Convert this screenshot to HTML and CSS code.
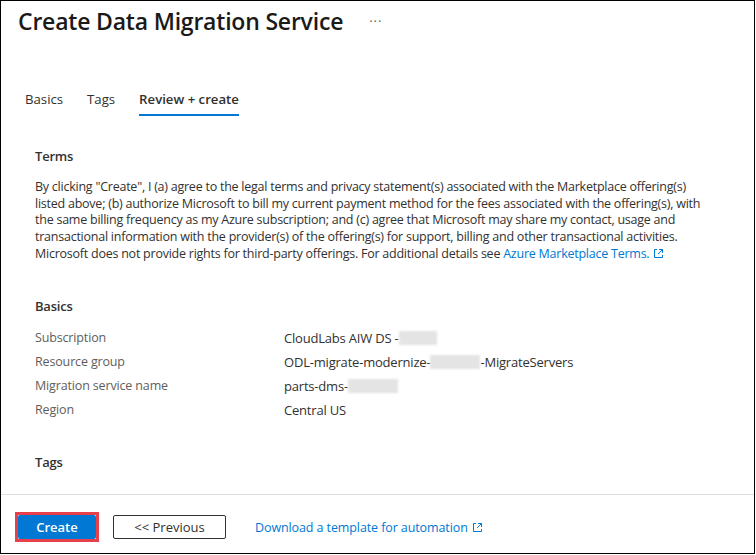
FILE: index.html
```html
<!DOCTYPE html>
<html lang="en">
<head>
<meta charset="utf-8">
<title>Create Data Migration Service</title>
<link rel="stylesheet" href="styles.css">
</head>
<body>
<div class="frame">
  <header class="header">
    <h1 class="title">Create Data Migration Service</h1>
    <span class="more">···</span>
  </header>
  <nav class="tabs">
    <span class="tab">Basics</span>
    <span class="tab">Tags</span>
    <span class="tab active">Review + create</span>
  </nav>
  <main class="content">
    <section class="section terms-section">
      <h2 class="section-title">Terms</h2>
      <p class="terms">By clicking "Create", I (a) agree to the legal terms and privacy statement(s) associated with the Marketplace offering(s)<br>listed above; (b) authorize Microsoft to bill my current payment method for the fees associated with the offering(s), with<br>the same billing frequency as my Azure subscription; and (c) agree that Microsoft may share my contact, usage and<br>transactional information with the provider(s) of the offering(s) for support, billing and other transactional activities.<br>Microsoft does not provide rights for third-party offerings. For additional details see <a class="link" href="#">Azure Marketplace Terms.</a><svg class="ext" width="11" height="11" viewBox="0 0 11 11"><path d="M4 1.5H1.5v8h8V7" fill="none" stroke="#0078d4" stroke-width="1"/><path d="M6 1.5h3.5V5M9.5 1.5L5 6" fill="none" stroke="#0078d4" stroke-width="1"/></svg></p>
    </section>
    <section class="section basics">
      <h2 class="section-title">Basics</h2>
      <div class="grid">
        <div class="label">Subscription</div>
        <div class="value">CloudLabs AIW DS -<span class="blur w38"></span></div>
        <div class="label">Resource group</div>
        <div class="value">ODL-migrate-modernize-<span class="blur w50"></span>-MigrateServers</div>
        <div class="label">Migration service name</div>
        <div class="value">parts-dms-<span class="blur w50"></span></div>
        <div class="label">Region</div>
        <div class="value">Central US</div>
      </div>
    </section>
    <section class="section tags">
      <h2 class="section-title">Tags</h2>
    </section>
  </main>
  <footer class="footer">
    <span class="highlight"><button class="btn primary">Create</button></span>
    <button class="btn secondary">&lt;&lt; Previous</button>
    <a class="link footer-link" href="#">Download a template for automation</a><svg class="ext" width="11" height="11" viewBox="0 0 11 11"><path d="M4 1.5H1.5v8h8V7" fill="none" stroke="#0078d4" stroke-width="1"/><path d="M6 1.5h3.5V5M9.5 1.5L5 6" fill="none" stroke="#0078d4" stroke-width="1"/></svg>
  </footer>
</div>
</body>
</html>
```
FILE: styles.css
```css
* { box-sizing: border-box; }
html, body { margin: 0; padding: 0; background: #fff; }
body {
  font-family: "Open Sans", "Noto Sans", sans-serif;
  color: #323130;
  font-size: 13px;
}
.frame {
  width: 755px;
  height: 554px;
  border: 1px solid #000;
  display: flex;
  flex-direction: column;
  overflow: hidden;
}
.header {
  display: flex;
  align-items: center;
  padding: 3px 0 0 17px;
  height: 36px;
  flex: none;
}
.title {
  margin: 0;
  font-size: 23px;
  letter-spacing: -0.2px;
  font-weight: 600;
  line-height: 32px;
  color: #1b1a19;
}
.more {
  margin-left: 26px;
  color: #605e5c;
  font-size: 13px;
  letter-spacing: 1px;
}
.tabs {
  display: flex;
  gap: 24px;
  padding: 52px 0 0 24px;
  height: 79px;
  flex: none;
}
.tab {
  font-size: 13.2px;
  line-height: 20px;
  height: 27px;
  color: #323130;
}
.tab.active {
  font-weight: 600;
  border-bottom: 2px solid #0078d4;
}
.content {
  flex: 1;
  min-height: 0;
  overflow: hidden;
  padding: 0 20px 0 34px;
}
.section-title {
  margin: 0;
  font-size: 13px;
  letter-spacing: -0.2px;
  font-weight: 600;
  line-height: 20px;
}
.terms-section { padding-top: 30px; }
.terms {
  margin: 13px 0 0 0;
  font-size: 12.5px;
  letter-spacing: -0.24px;
  line-height: 16.7px;
  white-space: nowrap;
}
.link { color: #0078d4; text-decoration: none; }
.ext { margin-left: 4px; vertical-align: -1px; }
.basics { padding-top: 33px; }
.grid {
  display: grid;
  grid-template-columns: 249px 1fr;
  margin-top: 10px;
  line-height: 24px;
}
.label {
  color: #605e5c;
  font-size: 12.5px;
  letter-spacing: -0.15px;
}
.value {
  color: #323130;
  letter-spacing: -0.2px;
}
.blur {
  display: inline-block;
  height: 14px;
  vertical-align: -2px;
  background: #e4e4e4;
  filter: blur(1px);
}
.w38 { width: 38px; }
.w50 { width: 50px; }
.tags { padding-top: 30px; }
.footer {
  flex: none;
  border-top: 1px solid #e1dfdd;
  height: 59px;
  display: flex;
  align-items: center;
  padding: 6px 0 0 14px;
}
.highlight {
  border: 3px solid #e8404a;
  display: inline-flex;
}
.btn {
  font-family: inherit;
  font-size: 13px;
  height: 24px;
  border-radius: 2px;
  padding: 0 10px;
  cursor: pointer;
}
.primary {
  background: #0078d4;
  color: #fff;
  font-weight: 600;
  border: none;
  width: 78px;
}
.secondary {
  margin-left: 14px;
  background: #fff;
  border: 1px solid #323130;
  color: #323130;
  width: 113px;
}
.footer-link {
  margin-left: 29px;
  font-size: 12.5px;
  letter-spacing: -0.1px;
}
```
